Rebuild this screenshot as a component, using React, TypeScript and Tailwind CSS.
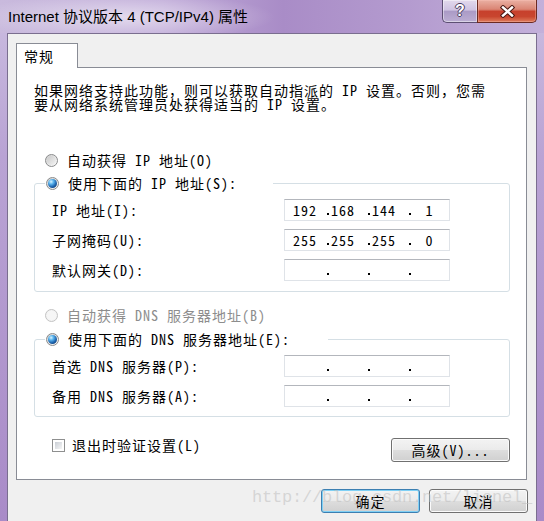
import React from "react";

const UI = "font-['Noto_Sans_Mono_CJK_SC','Noto_Sans_CJK_SC',monospace] text-[14px] tracking-[1px] text-black";

function Radio({ checked, disabled }: { checked?: boolean; disabled?: boolean }) {
  return (
    <span
      className={`relative inline-block w-[13px] h-[13px] shrink-0 rounded-full border ${
        disabled
          ? "border-[#c4c4c4] bg-[#f3f3f3]"
          : "border-[#8a8b8c] bg-[linear-gradient(135deg,#cfcfcf_0%,#e9e9e9_55%,#fbfbfb_100%)]"
      }`}
    >
      <span
        className={`absolute left-[1px] top-[1px] w-[9px] h-[9px] rounded-full ${
          disabled ? "bg-[#f6f6f6]" : "bg-[linear-gradient(135deg,#c9c9c9,#f4f4f4)]"
        }`}
      />
      {checked && (
        <span className="absolute left-[1px] top-[1px] w-[9px] h-[9px] rounded-full bg-[radial-gradient(circle_at_35%_30%,#d8f3ff_0%,#5ab4ee_28%,#1d63ad_60%,#0a2c58_100%)]" />
      )}
    </span>
  );
}

function RadioLabel({ checked, disabled, text }: { checked?: boolean; disabled?: boolean; text: string }) {
  return (
    <div className={`flex items-center h-[16px] leading-[16px] gap-[9px] whitespace-nowrap ${disabled ? "text-[#8d8d8d]" : ""}`}>
      <Radio checked={checked} disabled={disabled} />
      <span>{text}</span>
    </div>
  );
}

function Dot() {
  return (
    <span className="w-[4px] h-[20px] flex items-start">
      <span className="block w-[2px] h-[2px] bg-black mt-[13px]" />
    </span>
  );
}

function IpBox({ v }: { v?: string[] }) {
  const p = v ?? ["", "", "", ""];
  return (
    <div className="w-[166px] h-[22px] border border-[#dfe3e8] border-t-[#b3b6bc] bg-white flex items-center pl-[8px] leading-[20px]">
      <span className="w-[34px] text-left">{p[0]}</span>
      <Dot />
      <span className="w-[37px] text-left">{p[1]}</span>
      <Dot />
      <span className="w-[37px] text-left">{p[2]}</span>
      <Dot />
      <span className="w-[33px] text-center">{p[3]}</span>
    </div>
  );
}

function Row({ label, v }: { label: string; v?: string[] }) {
  return (
    <div className="flex items-center h-[22px] pl-[17px]">
      <span className="w-[232px] whitespace-nowrap leading-[16px]">{label}</span>
      <IpBox v={v} />
    </div>
  );
}

function Btn({ children, w, def }: { children: React.ReactNode; w: string; def?: boolean }) {
  return (
    <div
      className={`h-[24px] ${w} rounded-[3px] border flex items-center justify-center whitespace-nowrap leading-[16px] bg-[linear-gradient(180deg,#f3f3f3_0%,#ebebeb_48%,#dddddd_52%,#d0d0d0_100%)] ${
        def
          ? "border-[#3c7fb1] shadow-[inset_0_0_0_1px_#7fd0f5]"
          : "border-[#707070] shadow-[inset_0_0_0_1px_#fbfbfb]"
      }`}
    >
      {children}
    </div>
  );
}

export default function App() {
  return (
    <div className={`relative w-[544px] h-[521px] overflow-hidden bg-[linear-gradient(180deg,#cbbde0_0%,#b9a3d4_30%,#a98bc8_100%)] ${UI}`}>
      {/* title bar */}
      <div className="h-[33px] flex items-start justify-between bg-[radial-gradient(ellipse_150px_24px_at_125px_17px,rgba(255,255,255,0.55),rgba(255,255,255,0)),linear-gradient(90deg,#c9badd_0%,#bfaad8_30%,#a98cc7_52%,#b49bcf_75%,#c3b0da_100%)]">
        <div className="pl-[8px] pt-[8px] text-[15px] leading-[18px] tracking-normal text-black font-['Liberation_Sans','Noto_Sans_CJK_SC',sans-serif] whitespace-nowrap">
          Internet 协议版本 4 (TCP/IPv4) 属性
        </div>
        <div className="flex mr-[7px] h-[23px]">
          <div className="w-[35px] h-[23px] rounded-bl-[5px] border border-t-0 border-r-0 border-[#5d4f73] shadow-[inset_0_0_0_1px_rgba(255,255,255,0.45)] bg-[linear-gradient(180deg,#e2d9ec_0%,#cfc3e2_45%,#ab9bc6_52%,#bcaed3_100%)] flex items-center justify-center">
            <span className="text-white font-bold text-[16px] leading-[16px] tracking-normal font-['Liberation_Sans',sans-serif] [text-shadow:1px_0_0_#4a3d60,-1px_0_0_#4a3d60,0_1px_0_#4a3d60,0_-1px_0_#4a3d60]">
              ?
            </span>
          </div>
          <div className="w-[60px] h-[23px] rounded-br-[5px] border border-t-0 border-[#6b2a22] shadow-[inset_0_0_0_1px_rgba(255,200,190,0.35)] bg-[linear-gradient(180deg,#eab0a3_0%,#da8574_42%,#c7402c_52%,#c8452e_75%,#de7c5c_100%)] flex items-center justify-center">
            <svg width="15" height="13" viewBox="0 0 15 13">
              <path d="M3 2.5 L12 10.5 M12 2.5 L3 10.5" stroke="#4a1812" strokeWidth="4.4" strokeLinecap="square" fill="none" />
              <path d="M3 2.5 L12 10.5 M12 2.5 L3 10.5" stroke="#ffffff" strokeWidth="2.4" strokeLinecap="square" fill="none" />
            </svg>
          </div>
        </div>
      </div>

      {/* body */}
      <div className="flex h-[488px]">
        <div className="w-[7px] shrink-0" />
        <div className="w-[530px] shrink-0 border-l border-t border-r border-[#7a6e8f] bg-[#f0f0f0] pl-[8px] pt-[9px]">
          {/* tab */}
          <div className="flex items-end h-[24px]">
            <div className="relative z-10 -mb-px h-[25px] w-[62px] border border-b-0 border-[#898c95] bg-white pl-[7px] flex items-center text-[14px] tracking-[1px] font-['Noto_Sans_CJK_SC',sans-serif]">
              常规
            </div>
          </div>
          {/* panel */}
          <div className="w-[511px] h-[413px] border border-[#898c95] bg-white pl-[17px] pt-[15px] flex flex-col">
            <p className="leading-[14px] whitespace-nowrap">
              如果网络支持此功能，则可以获取自动指派的 IP 设置。否则，您需
              <br />
              要从网络系统管理员处获得适当的 IP 设置。
            </p>

            <div className="mt-[41px] ml-[11px]">
              <RadioLabel text="自动获得 IP 地址(O)" />
            </div>

            <fieldset className="mt-[7px] w-[476px] border border-[#d5dfe5] rounded-[3px] pt-[8px] pb-[10px]">
              <legend className="ml-[10px] w-[228px] pl-[1px]">
                <RadioLabel checked text="使用下面的 IP 地址(S):" />
              </legend>
              <div className="flex flex-col gap-[8px]">
                <Row label="IP 地址(I):" v={["192", "168", "144", "1"]} />
                <Row label="子网掩码(U):" v={["255", "255", "255", "0"]} />
                <Row label="默认网关(D):" />
              </div>
            </fieldset>

            <div className="mt-[15px] ml-[11px]">
              <RadioLabel disabled text="自动获得 DNS 服务器地址(B)" />
            </div>

            <fieldset className="mt-[8px] w-[476px] border border-[#d5dfe5] rounded-[3px] pt-[8px] pb-[9px]">
              <legend className="ml-[10px] w-[283px] pl-[1px]">
                <RadioLabel checked text="使用下面的 DNS 服务器地址(E):" />
              </legend>
              <div className="flex flex-col gap-[8px]">
                <Row label="首选 DNS 服务器(P):" />
                <Row label="备用 DNS 服务器(A):" />
              </div>
            </fieldset>

            <div className="mt-[21px] w-[476px] flex justify-between items-start">
              <div className="ml-[18px] flex items-center h-[14px] gap-[7px] whitespace-nowrap leading-[14px]">
                <span className="w-[13px] h-[13px] shrink-0 border border-[#8e8f8f] bg-white p-[2px]">
                  <span className="block w-full h-full bg-[linear-gradient(135deg,#c9ced5,#f6f6f6)]" />
                </span>
                <span>退出时验证设置(L)</span>
              </div>
              <Btn w="w-[119px]">高级(V)...</Btn>
            </div>
          </div>

          {/* dialog buttons */}
          <div className="w-[512px] mt-[9px] flex justify-end gap-[9px]">
            <Btn w="w-[99px]" def>
              确定
            </Btn>
            <Btn w="w-[99px]">取消</Btn>
          </div>
        </div>
        <div className="w-[7px] shrink-0" />
      </div>

      {/* watermark */}
      <div className="pointer-events-none absolute left-[252px] top-[489px] text-[17px] leading-[17px] tracking-[-0.2px] text-[rgba(190,190,190,0.55)] font-['Liberation_Mono',monospace] whitespace-nowrap">
        http://blog.csdn.net/lionel_
      </div>
    </div>
  );
}
